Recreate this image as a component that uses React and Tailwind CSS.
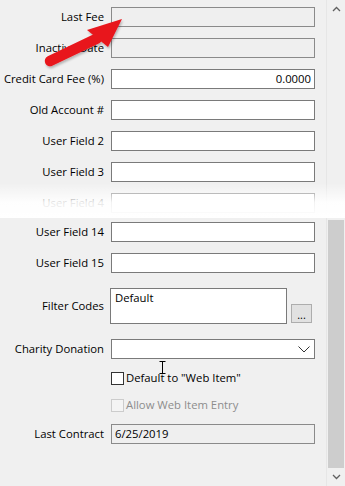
import React from "react";

const font = { fontFamily: '"Open Sans", "Liberation Sans", sans-serif' };

// one label + input row
const FieldRow = ({ label, value = "", disabled = false, align = "left", className = "" }) => (
  <div className={`flex items-center h-[20px] ${className}`}>
    <div className="w-[105px] pr-[1px] text-right text-[11.3px] text-black whitespace-nowrap">{label}</div>
    <div
      className={`ml-[6px] w-[204px] h-[20px] border border-[#7a7a7a] px-[3px] flex items-center text-[11.3px] text-black ${
        disabled ? "bg-[#efefef] border-[#8a8a8a]" : "bg-white"
      } ${align === "right" ? "justify-end" : "justify-start"}`}
    >
      {value}
    </div>
  </div>
);

const Chevron = ({ up }) => (
  <svg width="9" height="6" viewBox="0 0 9 6">
    <path
      d={up ? "M1 5 L4.5 1.5 L8 5" : "M1 1 L4.5 4.5 L8 1"}
      fill="none"
      stroke="#606060"
      strokeWidth="1.3"
    />
  </svg>
);

const RedArrow = () => (
  <svg className="absolute left-0 top-0 pointer-events-none" width="140" height="80" viewBox="0 0 140 80">
    <defs>
      <filter id="sh" x="-20%" y="-20%" width="140%" height="140%">
        <feDropShadow dx="1" dy="2" stdDeviation="1.2" floodColor="#000" floodOpacity="0.25" />
      </filter>
    </defs>
    <g filter="url(#sh)">
      <line x1="50" y1="61" x2="97" y2="38.5" stroke="#e8161b" strokeWidth="10.5" strokeLinecap="round" />
      <polygon points="87,30 122,19 108,47" fill="#e8161b" />
    </g>
  </svg>
);

const IBeam = () => (
  <svg className="absolute left-[158px] top-[361px] pointer-events-none" width="9" height="13" viewBox="0 0 9 13">
    <path d="M1.5 0.5 H7.5 M4.5 0.5 V12.5 M1.5 12.5 H7.5" stroke="#000" strokeWidth="1" fill="none" />
  </svg>
);

export default function App() {
  return (
    <div className="relative w-[345px] h-[486px] bg-[#f0f0f0] flex overflow-hidden" style={font}>
      {/* Form column */}
      <div className="w-[326px] flex flex-col pt-[7px]">
        <div className="flex flex-col gap-[11px]">
          <FieldRow label="Last Fee" disabled />
          <FieldRow label="Inactive Date" disabled />
          <FieldRow label="Credit Card Fee (%)" value="0.0000" align="right" />
          <FieldRow label="Old Account #" />
          <FieldRow label="User Field 2" />
          <FieldRow label="User Field 3" />
          <FieldRow label="User Field 4" />
          <FieldRow label="User Field 14" className="-mt-[2px]" />
          <FieldRow label="User Field 15" />
        </div>

        {/* Filter codes */}
        <div className="flex items-center mt-[15px] h-[36px]">
          <div className="w-[105px] pr-[1px] text-right text-[11.3px] text-black">Filter Codes</div>
          <div className="ml-[5px] w-[177px] h-[36px] border border-[#7a7a7a] bg-white px-[4px] pt-[1px] text-[11.3px] text-black leading-[16px]">
            Default
          </div>
          <div className="ml-[4px] self-end mb-[1px] w-[21px] h-[19px] border border-[#adadad] bg-[#e1e1e1] flex items-end justify-center text-[11px] leading-[14px] text-black">
            ...
          </div>
        </div>

        {/* Charity donation */}
        <div className="flex items-center mt-[15px] h-[20px]">
          <div className="w-[105px] pr-[1px] text-right text-[11.3px] text-black whitespace-nowrap">Charity Donation</div>
          <div className="ml-[6px] w-[204px] h-[20px] border border-[#7a7a7a] bg-white flex items-center justify-end pr-[4px]">
            <svg width="12" height="7" viewBox="0 0 12 7">
              <path d="M0.5 0.5 L6 6 L11.5 0.5" fill="none" stroke="#333" strokeWidth="1" />
            </svg>
          </div>
        </div>

        {/* Checkboxes */}
        <div className="flex items-center ml-[111px] mt-[13px] h-[13px]">
          <div className="w-[13px] h-[13px] border border-[#333] bg-white" />
          <span className="ml-[2px] text-[11.3px] text-black whitespace-nowrap">Default to "Web Item"</span>
        </div>
        <div className="flex items-center ml-[111px] mt-[14px] h-[13px]">
          <div className="w-[13px] h-[13px] border border-[#cccccc] bg-[#f4f4f4]" />
          <span className="ml-[2px] text-[11.3px] text-[#8d8d8d] whitespace-nowrap">Allow Web Item Entry</span>
        </div>

        {/* Last contract */}
        <div className="mt-[12px]">
          <FieldRow label="Last Contract" value="6/25/2019" disabled />
        </div>
      </div>

      {/* Scrollbar */}
      <div className="w-[19px] h-full border-l border-[#e6e6e6] bg-[#f0f0f0] flex flex-col">
        <div className="h-[17px] flex items-center justify-center pl-[1px]">
          <Chevron up />
        </div>
        <div className="h-[203px]" />
        <div className="mx-[1px] h-[248px] bg-[#cdcdcd]" />
        <div className="h-[17px] flex items-center justify-center pt-[1px]">
          <Chevron />
        </div>
      </div>

      {/* torn / faded band */}
      <div className="absolute left-0 right-0 top-[183px] h-[35px] bg-gradient-to-b from-white/0 via-white/90 via-55% to-white" />

      <RedArrow />
      <IBeam />
    </div>
  );
}
